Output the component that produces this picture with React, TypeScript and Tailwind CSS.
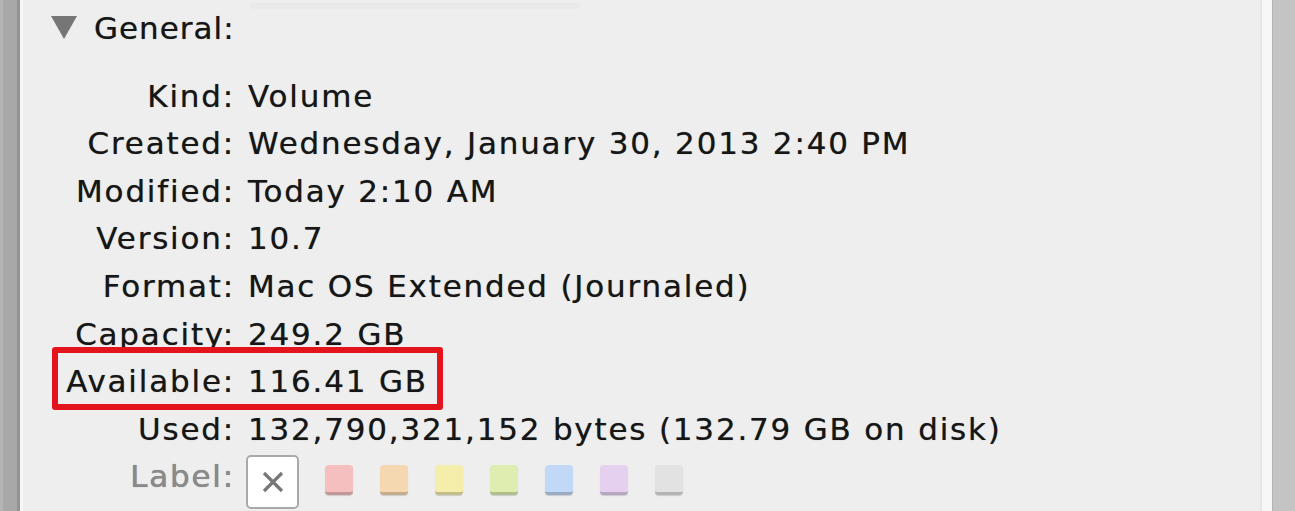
import React from 'react';

const rows: { label: string; value: string }[] = [
  { label: 'Kind:', value: 'Volume' },
  { label: 'Created:', value: 'Wednesday, January 30, 2013 2:40 PM' },
  { label: 'Modified:', value: 'Today 2:10 AM' },
  { label: 'Version:', value: '10.7' },
  { label: 'Format:', value: 'Mac OS Extended (Journaled)' },
  { label: 'Capacity:', value: '249.2 GB' },
  { label: 'Available:', value: '116.41 GB' },
  { label: 'Used:', value: '132,790,321,152 bytes (132.79 GB on disk)' },
];

const swatches = [
  'bg-[#f5bfbf]',
  'bg-[#f6d8b0]',
  'bg-[#f5eeab]',
  'bg-[#dfedb0]',
  'bg-[#c1d9f6]',
  'bg-[#e5d0f0]',
  'bg-[#e2e2e2]',
];

export default function App() {
  return (
    <div className="w-[1295px] h-[511px] overflow-hidden flex bg-[#eeeeee] text-[#161616] font-['DejaVu_Sans',sans-serif] [text-shadow:0_0_0.7px_rgba(0,0,0,0.55)]">
      {/* left window edge */}
      <div className="flex shrink-0">
        <div className="w-[3px] bg-[#b5b5b5]" />
        <div className="w-[14px] bg-[#a8a8a8]" />
        <div className="w-[3px] bg-[#929292]" />
        <div className="w-[3px] bg-[#f6f6f6]" />
      </div>

      <div className="relative flex-1 flex flex-col">
        {/* faint control cut off at the top */}
        <div className="absolute left-[227px] top-[3px] w-[330px] h-[6px] rounded-b bg-[#e9e9e9]" />

        <div className="flex items-center h-[56px] pl-[27px] gap-[16px]">
          <svg width="28" height="26" viewBox="0 0 28 26" className="shrink-0 mt-[-2px]">
            <polygon points="1,2 27,2 14,25" fill="#767676" />
          </svg>
          <span className="text-[31px] tracking-[1px]">General:</span>
        </div>

        <div className="relative flex flex-col mt-[16px] text-[31px] tracking-[1.8px]">
          {rows.map((r) => (
            <div key={r.label} className="flex items-center h-[47.6px]">
              <span className="w-[212px] shrink-0 text-right">{r.label}</span>
              <span className="pl-[13px] whitespace-nowrap">{r.value}</span>
            </div>
          ))}

          <div className="flex items-center h-[47.6px]">
            <span className="w-[212px] shrink-0 text-right text-[#8a8a8a]">Label:</span>
            <div className="ml-[11px] w-[53px] h-[54px] mt-[10px] shrink-0 flex items-center justify-center bg-white border-2 border-[#a9a9a9] rounded-[5px]">
              <svg width="24" height="24" viewBox="0 0 24 24">
                <path d="M3 3 L21 21 M21 3 L3 21" stroke="#777" strokeWidth="3.2" />
              </svg>
            </div>
            <div className="flex items-center gap-[27px] ml-[26px] mt-[6px]">
              {swatches.map((c) => (
                <div
                  key={c}
                  className={`${c} w-[28px] h-[30px] rounded-[4px] border-b-[3px] border-black/20 shadow-[0_1px_1px_rgba(0,0,0,0.15)]`}
                />
              ))}
            </div>
          </div>

          {/* red annotation box around Available */}
          <div className="absolute left-[29px] top-[275px] w-[391px] h-[63px] border-[6px] border-[#e3141c] rounded-[3px]" />
        </div>
      </div>

      {/* right window edge */}
      <div className="flex shrink-0">
        <div className="w-[2px] bg-[#e6e6e6]" />
        <div className="w-[10px] bg-[#f7f7f7]" />
        <div className="w-[1px] bg-[#b3b3b3]" />
        <div className="w-[22px] bg-[#c4c4c4]" />
      </div>
    </div>
  );
}
